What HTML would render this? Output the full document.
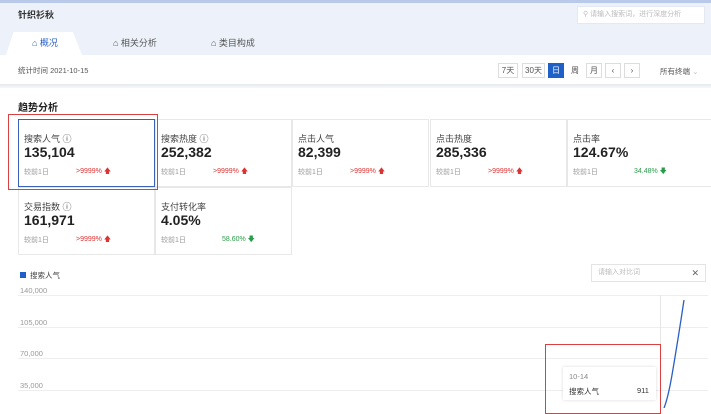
<!DOCTYPE html>
<html><head><meta charset="utf-8"><style>
*{margin:0;padding:0;box-sizing:border-box}
body{width:711px;height:408px;overflow:hidden;background:#fff;font-family:"Liberation Sans","Noto Sans CJK SC",sans-serif;position:relative;color:#333}
.a{position:absolute}
.card{position:absolute;width:137px;height:68px;border:1px solid #e8e8e8;background:#fff}
.card .t{position:absolute;left:5px;top:12px;font-size:9px;color:#444}
.card .v{position:absolute;left:5px;top:24px;font-size:14px;font-weight:bold;color:#222}
.card .c{position:absolute;left:5px;top:47px;font-size:7px;color:#999}
.card .p{position:absolute;left:57px;top:47px;font-size:7px;color:#d33}
.card .g{color:#2a9d4a;left:66px}
.btn{position:absolute;top:63px;height:15px;border:1px solid #ddd;font-size:8px;color:#555;text-align:center;line-height:13px;background:#fff}
.yl{position:absolute;left:20px;font-size:7.5px;color:#999}
.gl{position:absolute;left:18px;width:690px;height:1px;background:#eee}
</style></head><body>
<div class="a" style="left:0;top:0;width:711px;height:3px;background:#b9c9ea"></div>
<div class="a" style="left:0;top:3px;width:711px;height:52px;background:#edf2fa"></div>
<div class="a" style="left:18px;top:8px;font-size:9px;font-weight:bold;color:#333">针织衫秋</div>
<div class="a" style="left:577px;top:6px;width:128px;height:18px;background:#fff;border:1px solid #e4e8ef;font-size:7px;color:#bbb;line-height:16px;padding-left:5px">&#9906; 请输入搜索词，进行深度分析</div>
<div class="a" style="left:6px;top:32px;width:76px;height:23px;background:#fff;clip-path:polygon(10% 0,88% 0,100% 100%,0 100%)"></div>
<div class="a" style="left:32px;top:36px;font-size:9px;color:#2a63c8">⌂ 概况</div>
<div class="a" style="left:113px;top:36px;font-size:9px;color:#555">⌂ 相关分析</div>
<div class="a" style="left:211px;top:36px;font-size:9px;color:#555">⌂ 类目构成</div>
<div class="a" style="left:0;top:55px;width:711px;height:30px;background:#fff"></div>
<div class="a" style="left:18px;top:65px;font-size:7.5px;color:#555">统计时间 2021-10-15</div>
<div class="btn" style="left:498px;width:20px">7天</div>
<div class="btn" style="left:522px;width:23px">30天</div>
<div class="btn" style="left:548px;width:16px;background:#1f5fc8;border-color:#1f5fc8;color:#fff">日</div>
<div class="btn" style="left:567px;width:16px;border-color:#fff">周</div>
<div class="btn" style="left:586px;width:16px">月</div>
<div class="btn" style="left:605px;width:16px">‹</div>
<div class="btn" style="left:624px;width:16px">›</div>
<div class="a" style="left:660px;top:66px;font-size:7.5px;color:#555">所有终端 <span style="color:#bbb">⌄</span></div>
<div class="a" style="left:0;top:84px;width:711px;height:4px;background:linear-gradient(#e6e9ee,#f6f7f9)"></div>
<div class="a" style="left:18px;top:99px;font-size:10px;font-weight:bold;color:#222">趋势分析</div>

<div class="card" style="left:18px;top:119px;border:1px solid #3a5fbf"><div class="t">搜索人气 ⓘ</div><div class="v">135,104</div><div class="c">较前1日</div><div class="p">&gt;9999% 🡅</div></div>
<div class="card" style="left:155px;top:119px"><div class="t">搜索热度 ⓘ</div><div class="v">252,382</div><div class="c">较前1日</div><div class="p">&gt;9999% 🡅</div></div>
<div class="card" style="left:292px;top:119px"><div class="t">点击人气</div><div class="v">82,399</div><div class="c">较前1日</div><div class="p">&gt;9999% 🡅</div></div>
<div class="card" style="left:430px;top:119px"><div class="t">点击热度</div><div class="v">285,336</div><div class="c">较前1日</div><div class="p">&gt;9999% 🡅</div></div>
<div class="card" style="left:567px;top:119px;width:145px"><div class="t">点击率</div><div class="v">124.67%</div><div class="c">较前1日</div><div class="p g">34.48% 🡇</div></div>
<div class="card" style="left:18px;top:187px"><div class="t">交易指数 ⓘ</div><div class="v">161,971</div><div class="c">较前1日</div><div class="p">&gt;9999% 🡅</div></div>
<div class="card" style="left:155px;top:187px"><div class="t">支付转化率</div><div class="v">4.05%</div><div class="c">较前1日</div><div class="p g">58.60% 🡇</div></div>
<div class="a" style="left:8px;top:114px;width:150px;height:76px;border:1.5px solid #d9403f"></div>

<div class="a" style="left:20px;top:272px;width:6px;height:6px;background:#1f5fc8"></div>
<div class="a" style="left:30px;top:270px;font-size:7.5px;color:#444">搜索人气</div>
<div class="a" style="left:591px;top:264px;width:115px;height:18px;border:1px solid #e4e4e4;font-size:7px;color:#bbb;line-height:16px;padding-left:6px">请输入对比词<span style="position:absolute;right:6px;color:#666;font-size:9px">✕</span></div>
<div class="yl" style="top:286px">140,000</div><div class="gl" style="top:295px"></div>
<div class="yl" style="top:318px">105,000</div><div class="gl" style="top:327px"></div>
<div class="yl" style="top:349px">70,000</div><div class="gl" style="top:358px"></div>
<div class="yl" style="top:381px">35,000</div><div class="gl" style="top:390px"></div>
<div class="a" style="left:660px;top:295px;width:1px;height:113px;background:#e6e6e6"></div>
<svg class="a" style="left:0;top:0" width="711" height="408"><path d="M664 408 Q668 398 672 375 Q678 340 684 300" stroke="#2a5fc6" stroke-width="1.3" fill="none"/></svg>
<div class="a" style="left:563px;top:367px;width:93px;height:33px;background:#fff;box-shadow:0 0 3px rgba(0,0,0,.15)"></div>
<div class="a" style="left:569px;top:372px;font-size:7.5px;color:#888">10-14</div>
<div class="a" style="left:569px;top:386px;font-size:7.5px;color:#333">搜索人气</div>
<div class="a" style="left:637px;top:386px;font-size:7.5px;color:#333">911</div>
<div class="a" style="left:545px;top:344px;width:116px;height:70px;border:1.5px solid #d9403f"></div>
</body></html>
